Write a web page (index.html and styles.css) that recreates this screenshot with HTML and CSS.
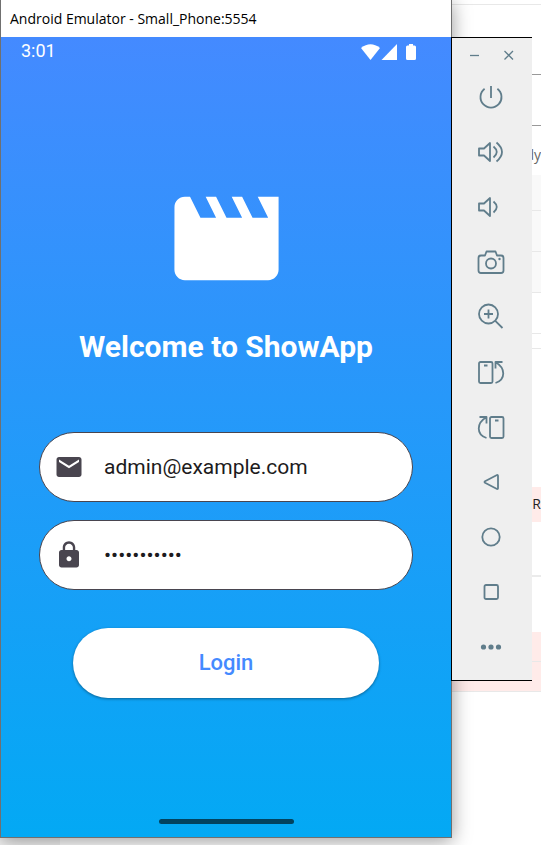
FILE: index.html
```
<!DOCTYPE html>
<html lang="en">
<head>
<meta charset="utf-8">
<meta name="viewport" content="width=device-width, initial-scale=1">
<title>Android Emulator - Small_Phone:5554</title>
<link rel="stylesheet" href="styles.css">
</head>
<body>
<div class="desktop">
  <div class="backdrop">
    <div class="row top-line"></div>
    <div class="row header"></div>
    <div class="row entry"></div>
    <div class="row note">dy</div>
    <div class="row shaded first"></div>
    <div class="row shaded"></div>
    <div class="row shaded"></div>
    <div class="row plain"></div>
    <div class="row slim"></div>
    <div class="row blank"></div>
    <div class="row alert">R</div>
    <div class="row section"></div>
    <div class="row blank-small"></div>
    <div class="row alert-line"></div>
    <div class="row alert-line"></div>
    <div class="row rest"><div class="side"></div></div>
  </div>

  <section class="window">
    <header class="titlebar">Android Emulator - Small_Phone:5554</header>
    <main class="screen">
      <div class="statusbar">
        <span class="clock">3:01</span>
        <svg class="status-icons" width="56" height="18" viewBox="0 0 56 18" fill="#fff" aria-hidden="true">
          <path d="M0 5Q9.500-2.500 19 5L9.500 17z"/>
          <path d="M36 1v16H20.500z"/>
          <path d="M48 1h4v1.500h1.500q1.500 0 1.500 1.500v11.500q0 1.500-1.500 1.500h-7q-1.500 0-1.500-1.500V4q0-1.500 1.500-1.500H48z"/>
        </svg>
      </div>
      <form class="login" onsubmit="return false">
        <svg class="logo" viewBox="0 0 24 24" fill="#fff" aria-hidden="true"><path d="M18 4l2 4h-3l-2-4h-2l2 4h-3l-2-4H8l2 4H7L5 4H4c-1.100 0-1.990.9-1.990 2L2 18c0 1.100.9 2 2 2h16c1.100 0 2-.9 2-2V4h-4z"/></svg>
        <h1>Welcome to ShowApp</h1>
        <label class="field">
          <svg viewBox="0 0 24 24" aria-hidden="true"><path d="M20 4H4c-1.100 0-1.990.9-1.990 2L2 18c0 1.100.9 2 2 2h16c1.100 0 2-.9 2-2V6c0-1.100-.9-2-2-2zm0 4l-8 5-8-5V6l8 5 8-5v2z"/></svg>
          <input type="email" aria-label="Email" value="admin@example.com">
        </label>
        <label class="field">
          <svg viewBox="0 0 24 24" aria-hidden="true"><path d="M18 8h-1V6c0-2.760-2.240-5-5-5S7 3.240 7 6v2H6c-1.100 0-2 .9-2 2v10c0 1.100.9 2 2 2h12c1.100 0 2-.9 2-2V10c0-1.100-.9-2-2-2zm-6 9c-1.100 0-2-.9-2-2s.9-2 2-2 2 .9 2 2-.9 2-2 2zm3.100-9H8.900V6c0-1.710 1.390-3.100 3.100-3.100s3.100 1.390 3.100 3.100v2z"/></svg>
          <input type="password" aria-label="Password" value="password123">
        </label>
        <button class="submit" type="submit">Login</button>
      </form>
      <div class="gesture"></div>
    </main>
  </section>

  <aside class="toolbar">
    <div class="controls">
      <button aria-label="Minimize"><svg width="12" height="12" viewBox="0 0 12 12"><path d="M1 6.500h9"/></svg></button>
      <button aria-label="Close"><svg width="12" height="12" viewBox="0 0 12 12"><path d="M1.500 2l8.500 8.500M10 2l-8.500 8.500"/></svg></button>
    </div>
    <button class="tool" aria-label="Power"><svg viewBox="0 0 30 31"><path d="M7.600 6.800a10.500 10.500 0 1 0 12.800 0M14 4v12"/></svg></button>
    <button class="tool" aria-label="Volume up"><svg viewBox="0 0 30 31"><path d="M2 11.500h5l6-5.500v18l-6-5.500H2zM16.500 9.500q6.500 5.500 0 11M19.500 5.500q11 9.500 0 19"/></svg></button>
    <button class="tool" aria-label="Volume down"><svg viewBox="0 0 30 31"><path d="M2 11.500h5l6-5.500v18l-6-5.500H2zM16.500 9.500q6.500 5.500 0 11"/></svg></button>
    <button class="tool" aria-label="Take screenshot"><svg viewBox="0 0 30 31"><path d="M4 8.500h4l1.500-4h9l1.500 4h4q2.500 0 2.500 2.500v12.500q0 2.500-2.500 2.500H4q-2.500 0-2.500-2.500V11q0-2.500 2.500-2.500z"/><circle cx="14" cy="16.500" r="5"/><circle class="solid" cx="22.500" cy="12" r="1.200"/></svg></button>
    <button class="tool" aria-label="Zoom"><svg viewBox="0 0 30 31"><circle cx="11.500" cy="12" r="9.500"/><path d="M18.300 18.800l7.200 7.200M7 12h9M11.500 7.500v9"/></svg></button>
    <button class="tool" aria-label="Rotate left"><svg viewBox="0 0 30 31"><rect x="2" y="5" width="13.500" height="21" rx="1.500"/><path d="M7 8.500h3.500M18.500 26C29 22.500 28.500 11 19 5.500M25.500 5h-7v6.500"/></svg></button>
    <button class="tool" aria-label="Rotate right"><svg viewBox="0 0 30 31"><rect x="13" y="5" width="13.500" height="21" rx="1.500"/><path d="M18 8.500h3.500M9.500 26C-1 22.500-.5 11 9 5.500M2.500 5h7v6.500"/></svg></button>
    <button class="tool" aria-label="Back"><svg viewBox="0 0 30 31"><path d="M20 8L8 14.200q-1 .8 0 1.600L20 22q1 .3 1-1V9q0-1.300-1-1z"/></svg></button>
    <button class="tool" aria-label="Home"><svg viewBox="0 0 30 31"><circle cx="14" cy="15" r="8.700"/></svg></button>
    <button class="tool" aria-label="Overview"><svg viewBox="0 0 30 31"><rect x="7.500" y="8" width="13.500" height="14" rx="1.500"/></svg></button>
    <button class="tool" aria-label="More"><svg viewBox="0 0 30 31"><g class="solid"><circle cx="6.500" cy="15" r="2.600"/><circle cx="14" cy="15" r="2.600"/><circle cx="21.500" cy="15" r="2.600"/></g></svg></button>
  </aside>
</div>
</body>
</html>
```
FILE: styles.css
```
* { box-sizing: border-box; }

body {
  margin: 0;
  background: #fff;
  font-family: Roboto, sans-serif;
}

button {
  margin: 0;
  padding: 0;
  border: 0;
  background: none;
  font: inherit;
}

.desktop {
  position: relative;
  display: flex;
  align-items: flex-start;
  min-height: 100vh;
  padding: 0 9px 7px 0;
  overflow: hidden;
}

/* Page visible behind the emulator */
.backdrop {
  position: absolute;
  inset: 0;
  display: flex;
  flex-direction: column;
  color: #222;
  font: 14px/34px "Open Sans", sans-serif;
  text-align: right;
}
.row { flex: none; border-bottom: 1px solid #e8e8e8; }
.top-line { height: 5px; }
.header { height: 70px; border-color: #999; }
.entry { height: 51px; border-color: #999; }
.note { height: 49px; padding-top: 12px; border: 0; color: #666; }
.shaded { height: 41px; background: #f9f9f9; }
.shaded.first { height: 36px; }
.plain { height: 41px; }
.slim { height: 15px; }
.blank { height: 138px; border: 0; }
.alert { height: 35px; background: #ffebe9; border: 0; }
.section { height: 55px; border-bottom: 2px solid #ebebeb; }
.blank-small { height: 55px; border: 0; }
.alert-line { height: 30px; background: #ffebe9; }
.rest { display: flex; flex: 1; border: 0; }
.side { width: 60px; background: #f3f3f3; }

/* Emulator window */
.window {
  position: relative;
  flex: 1;
  min-width: 0;
  border: 1px solid #707070;
  border-top: 0;
  background: #fff;
  box-shadow: 0 3px 18px rgba(0, 0, 0, 0.4);
}
.titlebar {
  height: 37px;
  padding-left: 9px;
  color: #000;
  font: 14px/37px "Open Sans", sans-serif;
}
.screen {
  display: flex;
  flex-direction: column;
  height: 800px;
  background: linear-gradient(#448aff, #03a9f4);
}
.statusbar {
  display: flex;
  align-items: center;
  justify-content: space-between;
  height: 30px;
  padding: 0 34px 0 20px;
  color: #fff;
  font-size: 18px;
  line-height: 28px;
}
.clock { height: 30px; }
.login {
  display: flex;
  flex: 1;
  flex-direction: column;
  align-items: center;
  padding: 109px 38px 0;
}
.logo { width: 125px; height: 125px; }
h1 {
  margin: 27px 0 66px;
  color: #fff;
  font-size: 30px;
  font-weight: 700;
  line-height: 38px;
  white-space: nowrap;
}
.field {
  display: flex;
  align-items: center;
  gap: 20px;
  width: 100%;
  height: 70px;
  margin-bottom: 18px;
  padding: 0 14px;
  border: 1px solid #49454f;
  border-radius: 35px;
  background: #fff;
}
.field svg { flex: none; width: 30px; height: 30px; fill: #49454f; }
.field input {
  flex: 1;
  min-width: 0;
  padding: 0;
  border: 0;
  outline: 0;
  background: none;
  color: #1d1b20;
  font: 21px/30px Roboto, sans-serif;
}
.submit {
  width: 82%;
  height: 70px;
  margin-top: 20px;
  padding-bottom: 2px;
  border-radius: 35px;
  background: #fff;
  box-shadow: 0 1px 3px rgba(0, 0, 0, 0.4);
  color: #448aff;
  font-size: 22px;
  font-weight: 500;
}
.gesture {
  align-self: center;
  width: 30%;
  height: 5px;
  margin-bottom: 13px;
  border-radius: 3px;
  background: #02435f;
}

/* Emulator side toolbar */
.toolbar {
  position: relative;
  display: flex;
  flex: none;
  flex-direction: column;
  width: 81px;
  margin: 37px 0 0 -1px;
  padding-bottom: 5px;
  border: solid #000;
  border-width: 1px 0 1px 1px;
  background: #efefef;
}
.toolbar svg {
  display: block;
  fill: none;
  stroke: #607d8b;
  stroke-width: 1.8;
  stroke-linejoin: round;
}
.toolbar .solid { fill: #607d8b; stroke: none; }
.controls {
  display: flex;
  justify-content: center;
  height: 32px;
}
.controls button {
  display: grid;
  place-items: center;
  width: 34px;
  height: 34px;
}
.toolbar .controls svg { stroke-width: 1.3; }
.tool { display: grid; place-items: center; height: 55px; }
.tool svg { width: 30px; height: 31px; }
```
